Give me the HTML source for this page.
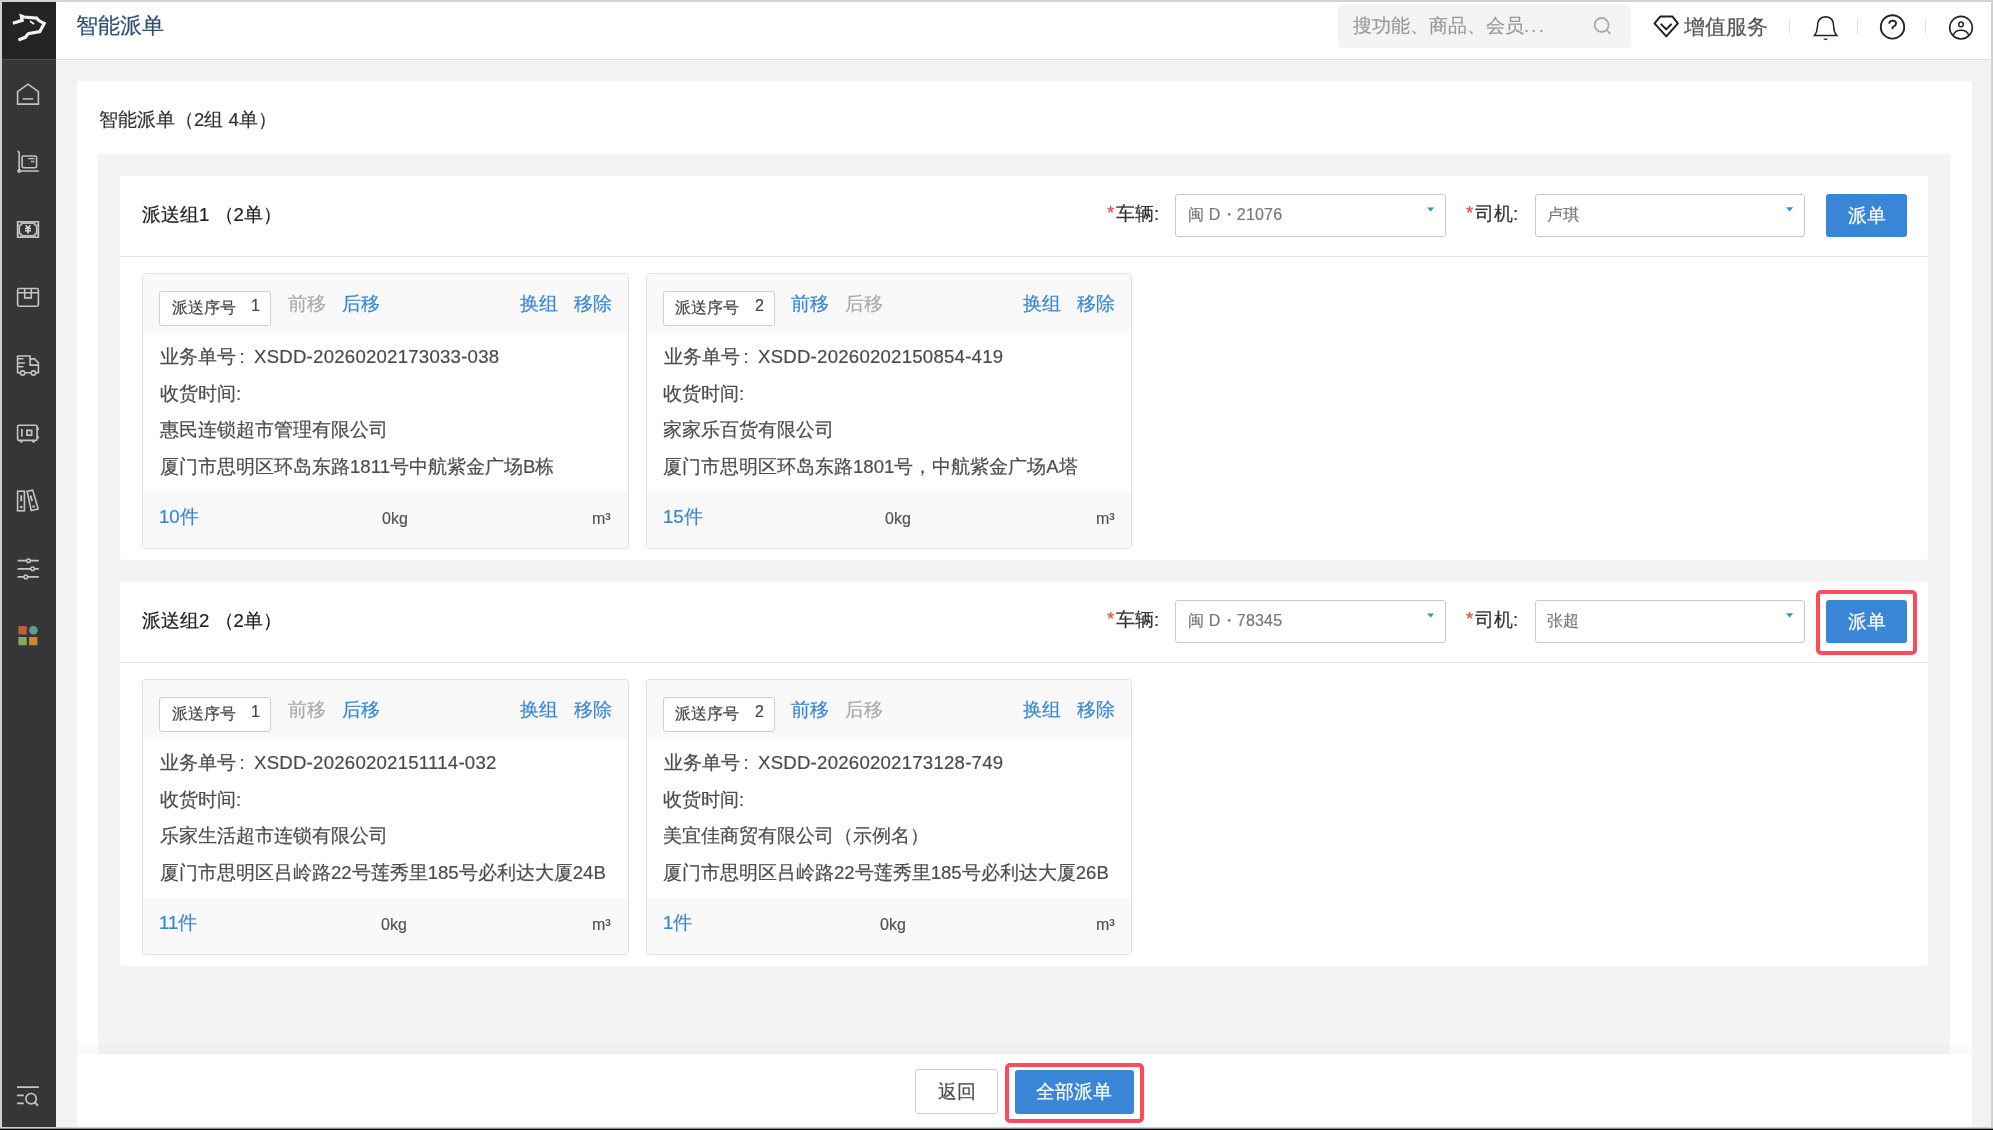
<!DOCTYPE html>
<html><head><meta charset="utf-8">
<style>
html,body{margin:0;padding:0;}
body{width:1993px;height:1130px;overflow:hidden;position:relative;background:#d2d0d2;font-family:"Liberation Sans",sans-serif;}
.t{position:absolute;line-height:50px;white-space:pre;will-change:transform;-webkit-text-stroke:0.2px currentColor;}
svg{position:absolute;left:0;top:0;}
</style></head><body>
<div style="position:absolute;left:0px;top:1128px;width:1993px;height:1px;background:#8a898a"></div>
<div style="position:absolute;left:0px;top:1129px;width:1993px;height:1px;background:#000"></div>
<div style="position:absolute;left:2px;top:2px;width:54px;height:1125px;background:#353638"></div>
<div style="position:absolute;left:2px;top:2px;width:54px;height:57px;background:#252422"></div>
<div style="position:absolute;left:2px;top:59px;width:54px;height:1px;background:#4a4b4d"></div>
<div style="position:absolute;left:56px;top:2px;width:1935px;height:57px;background:#fff"></div>
<div style="position:absolute;left:56px;top:59px;width:1935px;height:1px;background:#dcdcdc"></div>
<div style="position:absolute;left:56px;top:60px;width:1935px;height:1067px;background:#f2f2f2"></div>
<div style="position:absolute;left:77px;top:81px;width:1895px;height:1046px;background:#fff"></div>
<div style="position:absolute;left:98px;top:154px;width:1852px;height:900px;background:#f4f4f4"></div>
<div class="t" style="left:76.4px;top:0.5px;font-size:21.6px;color:#2d4f6e;">智能派单</div>
<div style="position:absolute;left:1338px;top:5px;width:293px;height:43px;background:#f4f4f4;border-radius:4px"></div>
<div class="t" style="left:1353.2px;top:1.4px;font-size:18.6px;color:#999;">搜功能、商品、会员<span style="letter-spacing:2.2px">...</span></div>
<div class="t" style="left:1684.4px;top:1.8px;font-size:21.3px;color:#555;">增值服务</div>
<div style="position:absolute;left:1789px;top:18px;width:1px;height:16px;background:#e0e0e0"></div>
<div style="position:absolute;left:1857px;top:18px;width:1px;height:16px;background:#e0e0e0"></div>
<div style="position:absolute;left:1925px;top:18px;width:1px;height:16px;background:#e0e0e0"></div>
<div class="t" style="left:99.1px;top:94.8px;font-size:18.6px;color:#333;">智能派单（2组 4单）</div>
<div style="position:absolute;left:120px;top:176px;width:1808px;height:384px;background:#fff;border-radius:0 0 4px 4px"></div>
<div style="position:absolute;left:120px;top:256px;width:1808px;height:1px;background:#e8e8e8"></div>
<div class="t" style="left:141.6px;top:189.5px;font-size:18.6px;color:#222;">派送组1 （2单）</div>
<div class="t" style="left:1106.6px;top:187.5px;font-size:18.6px;color:#e94a4a;">*</div>
<div class="t" style="left:1115.6px;top:188.9px;font-size:18.6px;color:#333;">车辆:</div>
<div style="position:absolute;left:1175px;top:194px;width:271px;height:43px;background:#fff;border:1px solid #c8c8c8;border-radius:3px;box-sizing:border-box"></div>
<div class="t" style="left:1187.6px;top:190.3px;font-size:16px;color:#777;letter-spacing:0.2px">闽 D・21076</div>
<div class="t" style="left:1466.1px;top:187.5px;font-size:18.6px;color:#e94a4a;">*</div>
<div class="t" style="left:1475.4px;top:188.9px;font-size:18.6px;color:#333;">司机:</div>
<div style="position:absolute;left:1535px;top:194px;width:270px;height:43px;background:#fff;border:1px solid #c8c8c8;border-radius:3px;box-sizing:border-box"></div>
<div class="t" style="left:1546.8px;top:190.3px;font-size:16px;color:#777;">卢琪</div>
<div style="position:absolute;left:1826px;top:194px;width:81px;height:43px;background:#3a86d6;border-radius:3px"></div>
<div class="t" style="left:1847.6px;top:190.5px;font-size:18.6px;color:#fff;">派单</div>
<div style="position:absolute;left:142px;top:273px;width:487px;height:276px;box-sizing:border-box;border:1px solid #dfdfdf;border-radius:4px;background:#fff;overflow:hidden"><div style="position:absolute;left:0;top:0;right:0;height:59px;background:#f9f9f9"></div><div style="position:absolute;left:0;bottom:0;right:0;height:56px;background:#f9f9f9"></div></div>
<div style="position:absolute;left:159px;top:291px;width:112px;height:35px;background:#fff;border:1px solid #cfcfcf;border-radius:3px;box-sizing:border-box"></div>
<div class="t" style="left:171.6px;top:283.0px;font-size:16px;color:#444;">派送序号</div>
<div class="t" style="left:251.0px;top:280.5px;font-size:16px;color:#444;">1</div>
<div class="t" style="left:287.6px;top:279.0px;font-size:18.6px;color:#aaa;">前移</div>
<div class="t" style="left:341.6px;top:279.0px;font-size:18.6px;color:#3a86d6;">后移</div>
<div class="t" style="left:519.5px;top:279.0px;font-size:18.6px;color:#3a86d6;">换组</div>
<div class="t" style="left:573.5px;top:279.0px;font-size:18.6px;color:#3a86d6;">移除</div>
<div class="t" style="left:160.0px;top:332.0px;font-size:18.6px;color:#4a4a4a;">业务单号<span style="display:inline-block;width:18px;padding-left:3.6px;box-sizing:border-box">:</span><span style="letter-spacing:0.24px">XSDD-20260202173033-038</span></div>
<div class="t" style="left:159.8px;top:369.0px;font-size:18.6px;color:#4d4d4d;">收货时间:</div>
<div class="t" style="left:159.8px;top:405.0px;font-size:18.6px;color:#4d4d4d;">惠民连锁超市管理有限公司</div>
<div class="t" style="left:159.8px;top:441.5px;font-size:18.6px;color:#4d4d4d;">厦门市思明区环岛东路1811号中航紫金广场B栋</div>
<div class="t" style="left:159.2px;top:491.8px;font-size:18.6px;color:#3a86d6;">10件</div>
<div class="t" style="left:381.8px;top:494.0px;font-size:16px;color:#555;">0kg</div>
<div class="t" style="left:592.2px;top:493.5px;font-size:16px;color:#555;">m³</div>
<div style="position:absolute;left:646px;top:273px;width:486px;height:276px;box-sizing:border-box;border:1px solid #dfdfdf;border-radius:4px;background:#fff;overflow:hidden"><div style="position:absolute;left:0;top:0;right:0;height:59px;background:#f9f9f9"></div><div style="position:absolute;left:0;bottom:0;right:0;height:56px;background:#f9f9f9"></div></div>
<div style="position:absolute;left:663px;top:291px;width:112px;height:35px;background:#fff;border:1px solid #cfcfcf;border-radius:3px;box-sizing:border-box"></div>
<div class="t" style="left:675.1px;top:283.0px;font-size:16px;color:#444;">派送序号</div>
<div class="t" style="left:754.5px;top:280.5px;font-size:16px;color:#444;">2</div>
<div class="t" style="left:791.1px;top:279.0px;font-size:18.6px;color:#3a86d6;">前移</div>
<div class="t" style="left:845.1px;top:279.0px;font-size:18.6px;color:#aaa;">后移</div>
<div class="t" style="left:1023.0px;top:279.0px;font-size:18.6px;color:#3a86d6;">换组</div>
<div class="t" style="left:1077.0px;top:279.0px;font-size:18.6px;color:#3a86d6;">移除</div>
<div class="t" style="left:663.5px;top:332.0px;font-size:18.6px;color:#4a4a4a;">业务单号<span style="display:inline-block;width:18px;padding-left:3.6px;box-sizing:border-box">:</span><span style="letter-spacing:0.24px">XSDD-20260202150854-419</span></div>
<div class="t" style="left:663.3px;top:369.0px;font-size:18.6px;color:#4d4d4d;">收货时间:</div>
<div class="t" style="left:663.3px;top:405.0px;font-size:18.6px;color:#4d4d4d;">家家乐百货有限公司</div>
<div class="t" style="left:663.3px;top:441.5px;font-size:18.6px;color:#4d4d4d;">厦门市思明区环岛东路1801号，中航紫金广场A塔</div>
<div class="t" style="left:662.7px;top:491.8px;font-size:18.6px;color:#3a86d6;">15件</div>
<div class="t" style="left:885.4px;top:494.0px;font-size:16px;color:#555;">0kg</div>
<div class="t" style="left:1095.7px;top:493.5px;font-size:16px;color:#555;">m³</div>
<div style="position:absolute;left:120px;top:582px;width:1808px;height:384px;background:#fff;border-radius:0 0 4px 4px"></div>
<div style="position:absolute;left:120px;top:662px;width:1808px;height:1px;background:#e8e8e8"></div>
<div class="t" style="left:141.6px;top:595.5px;font-size:18.6px;color:#222;">派送组2 （2单）</div>
<div class="t" style="left:1106.6px;top:593.5px;font-size:18.6px;color:#e94a4a;">*</div>
<div class="t" style="left:1115.6px;top:594.9px;font-size:18.6px;color:#333;">车辆:</div>
<div style="position:absolute;left:1175px;top:600px;width:271px;height:43px;background:#fff;border:1px solid #c8c8c8;border-radius:3px;box-sizing:border-box"></div>
<div class="t" style="left:1187.6px;top:596.3px;font-size:16px;color:#777;letter-spacing:0.2px">闽 D・78345</div>
<div class="t" style="left:1466.1px;top:593.5px;font-size:18.6px;color:#e94a4a;">*</div>
<div class="t" style="left:1475.4px;top:594.9px;font-size:18.6px;color:#333;">司机:</div>
<div style="position:absolute;left:1535px;top:600px;width:270px;height:43px;background:#fff;border:1px solid #c8c8c8;border-radius:3px;box-sizing:border-box"></div>
<div class="t" style="left:1546.8px;top:596.3px;font-size:16px;color:#777;">张超</div>
<div style="position:absolute;left:1826px;top:600px;width:81px;height:43px;background:#3a86d6;border-radius:3px"></div>
<div class="t" style="left:1847.6px;top:596.5px;font-size:18.6px;color:#fff;">派单</div>
<div style="position:absolute;left:142px;top:679px;width:487px;height:276px;box-sizing:border-box;border:1px solid #dfdfdf;border-radius:4px;background:#fff;overflow:hidden"><div style="position:absolute;left:0;top:0;right:0;height:59px;background:#f9f9f9"></div><div style="position:absolute;left:0;bottom:0;right:0;height:56px;background:#f9f9f9"></div></div>
<div style="position:absolute;left:159px;top:697px;width:112px;height:35px;background:#fff;border:1px solid #cfcfcf;border-radius:3px;box-sizing:border-box"></div>
<div class="t" style="left:171.6px;top:689.0px;font-size:16px;color:#444;">派送序号</div>
<div class="t" style="left:251.0px;top:686.5px;font-size:16px;color:#444;">1</div>
<div class="t" style="left:287.6px;top:685.0px;font-size:18.6px;color:#aaa;">前移</div>
<div class="t" style="left:341.6px;top:685.0px;font-size:18.6px;color:#3a86d6;">后移</div>
<div class="t" style="left:519.5px;top:685.0px;font-size:18.6px;color:#3a86d6;">换组</div>
<div class="t" style="left:573.5px;top:685.0px;font-size:18.6px;color:#3a86d6;">移除</div>
<div class="t" style="left:160.0px;top:738.0px;font-size:18.6px;color:#4a4a4a;">业务单号<span style="display:inline-block;width:18px;padding-left:3.6px;box-sizing:border-box">:</span><span style="letter-spacing:0.24px">XSDD-20260202151114-032</span></div>
<div class="t" style="left:159.8px;top:775.0px;font-size:18.6px;color:#4d4d4d;">收货时间:</div>
<div class="t" style="left:159.8px;top:811.0px;font-size:18.6px;color:#4d4d4d;">乐家生活超市连锁有限公司</div>
<div class="t" style="left:159.8px;top:847.5px;font-size:18.6px;color:#4d4d4d;">厦门市思明区吕岭路22号莲秀里185号必利达大厦24B</div>
<div class="t" style="left:159.2px;top:897.8px;font-size:18.6px;color:#3a86d6;">11件</div>
<div class="t" style="left:381.1px;top:900.0px;font-size:16px;color:#555;">0kg</div>
<div class="t" style="left:592.2px;top:899.5px;font-size:16px;color:#555;">m³</div>
<div style="position:absolute;left:646px;top:679px;width:486px;height:276px;box-sizing:border-box;border:1px solid #dfdfdf;border-radius:4px;background:#fff;overflow:hidden"><div style="position:absolute;left:0;top:0;right:0;height:59px;background:#f9f9f9"></div><div style="position:absolute;left:0;bottom:0;right:0;height:56px;background:#f9f9f9"></div></div>
<div style="position:absolute;left:663px;top:697px;width:112px;height:35px;background:#fff;border:1px solid #cfcfcf;border-radius:3px;box-sizing:border-box"></div>
<div class="t" style="left:675.1px;top:689.0px;font-size:16px;color:#444;">派送序号</div>
<div class="t" style="left:754.5px;top:686.5px;font-size:16px;color:#444;">2</div>
<div class="t" style="left:791.1px;top:685.0px;font-size:18.6px;color:#3a86d6;">前移</div>
<div class="t" style="left:845.1px;top:685.0px;font-size:18.6px;color:#aaa;">后移</div>
<div class="t" style="left:1023.0px;top:685.0px;font-size:18.6px;color:#3a86d6;">换组</div>
<div class="t" style="left:1077.0px;top:685.0px;font-size:18.6px;color:#3a86d6;">移除</div>
<div class="t" style="left:663.5px;top:738.0px;font-size:18.6px;color:#4a4a4a;">业务单号<span style="display:inline-block;width:18px;padding-left:3.6px;box-sizing:border-box">:</span><span style="letter-spacing:0.24px">XSDD-20260202173128-749</span></div>
<div class="t" style="left:663.3px;top:775.0px;font-size:18.6px;color:#4d4d4d;">收货时间:</div>
<div class="t" style="left:663.3px;top:811.0px;font-size:18.6px;color:#4d4d4d;">美宜佳商贸有限公司（示例名）</div>
<div class="t" style="left:663.3px;top:847.5px;font-size:18.6px;color:#4d4d4d;">厦门市思明区吕岭路22号莲秀里185号必利达大厦26B</div>
<div class="t" style="left:662.7px;top:897.8px;font-size:18.6px;color:#3a86d6;">1件</div>
<div class="t" style="left:880.2px;top:900.0px;font-size:16px;color:#555;">0kg</div>
<div class="t" style="left:1095.7px;top:899.5px;font-size:16px;color:#555;">m³</div>
<div style="position:absolute;left:77px;top:1036px;width:1895px;height:18px;background:linear-gradient(to bottom,rgba(0,0,0,0),rgba(0,0,0,0.025))"></div>
<div style="position:absolute;left:77px;top:1054px;width:1895px;height:73px;background:#fff"></div>
<div style="position:absolute;left:915px;top:1069px;width:83px;height:45px;background:#fff;border:1px solid #cfcfcf;border-radius:3px;box-sizing:border-box"></div>
<div class="t" style="left:937.6px;top:1067.2px;font-size:18.6px;color:#4d4d4d;">返回</div>
<div style="position:absolute;left:1015px;top:1070px;width:119px;height:44px;background:#3a86d6;border-radius:3px"></div>
<div class="t" style="left:1036.2px;top:1066.7px;font-size:18.6px;color:#fff;">全部派单</div>
<div style="position:absolute;left:1005px;top:1063px;width:139px;height:60px;border:4px solid #fd4a5c;border-radius:5px;box-sizing:border-box"></div>
<div style="position:absolute;left:1816px;top:590px;width:101px;height:65px;border:4px solid #fd4a5c;border-radius:5px;box-sizing:border-box"></div>
<svg width="1993" height="1130" viewBox="0 0 1993 1130">
<g fill="none" stroke="#f2f2f2" stroke-width="3.2" stroke-linejoin="miter" stroke-linecap="butt">
<path d="M12.9,23.2 L22.2,20.3 L21.3,16.0 L23.9,17.0 L36.6,18.1 L39.2,20.8 L44.2,23.4 L39.8,31.5 L28.3,33.6 L25.3,37.3 L18.4,40.0" stroke-miterlimit="3"/>
</g>
<path d="M30.6,21.5 L33.6,23.7" stroke="#f2f2f2" stroke-width="1.7" stroke-linecap="round"/>
<g fill="none" stroke="#c4c4c4" stroke-width="1.6" stroke-linejoin="miter">
<path d="M17.6,104.1 V91.6 L28,84.2 L38.4,91.6 V104.1 Z"/>
<path d="M22.7,98.9 H33.1" stroke="#aaa" stroke-width="1.8"/>
<path d="M17.5,151.2 Q19.2,151.3 19.2,153.5 V171 H38.8"/>
<circle cx="19.2" cy="171" r="1.2"/>
<rect x="22.1" y="156" width="14.5" height="11.8" rx="1.6"/>
<path d="M28.2,158.6 H34.5 M31,161.5 H34.5" stroke-width="1.4"/>
<rect x="17.6" y="221.8" width="20.8" height="15.4" fill="#8e8e8f"/>
<path d="M22.3,223.4 H33.7 Q34.2,225.4 36.5,225.9 V233.1 Q34.2,233.6 33.7,235.6 H22.3 Q21.8,233.6 19.5,233.1 V225.9 Q21.8,225.4 22.3,223.4 Z" fill="#353638" stroke-width="1.2"/>
<circle cx="19.4" cy="223.4" r="0.8" fill="#353638" stroke="none"/><circle cx="36.6" cy="223.4" r="0.8" fill="#353638" stroke="none"/>
<circle cx="19.4" cy="235.6" r="0.8" fill="#353638" stroke="none"/><circle cx="36.6" cy="235.6" r="0.8" fill="#353638" stroke="none"/>
<path d="M25.7,225.3 L28,228.1 L30.3,225.3 M28,228.1 V233.8 M25,228.5 H31 M25,230.8 H31" stroke="#dadada" stroke-width="1.5"/>
<rect x="17.6" y="288.5" width="20.8" height="17.7" rx="1.6"/>
<path d="M17.6,292.7 H38.4 M24.7,288.5 V297.9 H31.3 V288.5"/>
<path d="M17.6,372.8 V356 H30.1 V358.9 H34.5 L38.4,362.9 V372.8 Z"/>
<path d="M30.1,358.9 V365.1 H38.4"/>
<path d="M17.6,358.7 H23.4 M17.6,362.9 H25 M17.6,366.7 H23.4" stroke-width="1.5"/>
<circle cx="22.6" cy="373.1" r="2.2" fill="#353638"/>
<circle cx="33.4" cy="373.1" r="2.2" fill="#353638"/>
<rect x="17.6" y="425.2" width="19.5" height="15.2" rx="1.4"/>
<path d="M37.7,427.6 V430.2 M37.7,435.8 V438.4" stroke-width="2.2"/>
<path d="M21.8,429 V436.6" stroke-width="1.7"/>
<rect x="27" y="430.4" width="4.6" height="4.8" stroke-width="1.8"/>
<path d="M19.8,441.6 H22.6 M32.2,441.6 H35" stroke-width="1.6"/>
<rect x="17.6" y="491.2" width="6.8" height="19.6"/>
<path d="M21.2,495.3 V501.2" stroke-width="1.9"/>
<circle cx="21.2" cy="507" r="0.6" stroke-width="1.4"/>
<path d="M27.2,491.3 L32.7,490.1 L38.2,509 L31.2,510.6 Z"/>
<path d="M30.5,495.6 L32.1,500.9" stroke-width="1.9"/>
<circle cx="33.6" cy="506.6" r="0.6" stroke-width="1.4"/>
<path d="M17.6,560.7 H38.8 M17.6,568.8 H38.8 M17.6,576.9 H38.8" stroke-width="1.7"/>
<circle cx="28.5" cy="560.7" r="1.8" fill="#353638" stroke-width="1.5"/>
<circle cx="32.6" cy="568.8" r="1.8" fill="#353638" stroke-width="1.5"/>
<circle cx="25.8" cy="576.9" r="1.8" fill="#353638" stroke-width="1.5"/>
<path d="M17,1087.2 H38.9 M17,1095.4 H23.8 M17,1103.4 H23.8" stroke-width="1.7"/>
<circle cx="31.1" cy="1098.7" r="5.2" stroke-width="1.7"/>
<path d="M34.9,1102.5 L38,1105.6" stroke-width="1.9"/>
</g>
<rect x="18.4" y="626.1" width="8.3" height="8.3" fill="#c85c36"/>
<circle cx="33.4" cy="630.3" r="4.3" fill="#5e9e92"/>
<rect x="18.4" y="637" width="8.3" height="8.2" fill="#86ad55"/>
<rect x="29.1" y="637" width="8.3" height="8.2" fill="#c98a35"/>
<g fill="none" stroke="#aaa" stroke-width="1.8"><circle cx="1601.6" cy="25" r="7"/><path d="M1606.7,30.1 L1610.4,33.8"/></g>
<g fill="none" stroke="#222" stroke-width="2" stroke-linejoin="round" stroke-linecap="round">
<path d="M1660.2,16.6 H1672.5 L1677.9,23.4 L1666.3,36.4 L1654.5,23.4 Z"/>
<path d="M1661.3,24.4 L1666.2,29.4 L1671.1,24.4"/>
</g>
<g fill="none" stroke="#222" stroke-width="1.5">
<path d="M1814.5,35.6 H1836.8 Q1834,32.5 1833.7,27 Q1833.8,17 1825.6,16.8 Q1817.4,17 1817.4,27 Q1817.1,32.5 1814.5,35.6 Z" stroke-linejoin="miter"/>
<path d="M1823.7,38.6 Q1825.6,40.4 1827.5,38.6" stroke-width="1.3"/>
<circle cx="1892.5" cy="26.9" r="11.7" stroke-width="1.9"/>
<path d="M1889.1,23.6 Q1889.4,20.6 1892.7,20.6 Q1896.1,20.8 1896.1,23.5 Q1895.9,25.7 1892.6,27.2 V29.3" stroke-width="1.8"/>
<circle cx="1961" cy="27.7" r="11.3" stroke-width="1.6"/>
<circle cx="1961" cy="24.4" r="2.3" stroke-width="1.5"/>
<path d="M1953.4,35.4 Q1954.5,30.3 1961,30.3 Q1967.5,30.3 1968.6,35.4" stroke-width="1.5"/>
</g>
<circle cx="1892.6" cy="32.8" r="0.5" fill="#bbb"/>
<path d="M1427,207.5 H1434.2 L1430.6,211.6 Z" fill="#3a92d0"/>
<path d="M1786,207.3 H1793.2 L1789.6,211.4 Z" fill="#3a92d0"/>
<path d="M1427,613.5 H1434.2 L1430.6,617.6 Z" fill="#3a92d0"/>
<path d="M1786,613.3 H1793.2 L1789.6,617.4 Z" fill="#3a92d0"/>
</svg>
</body></html>
